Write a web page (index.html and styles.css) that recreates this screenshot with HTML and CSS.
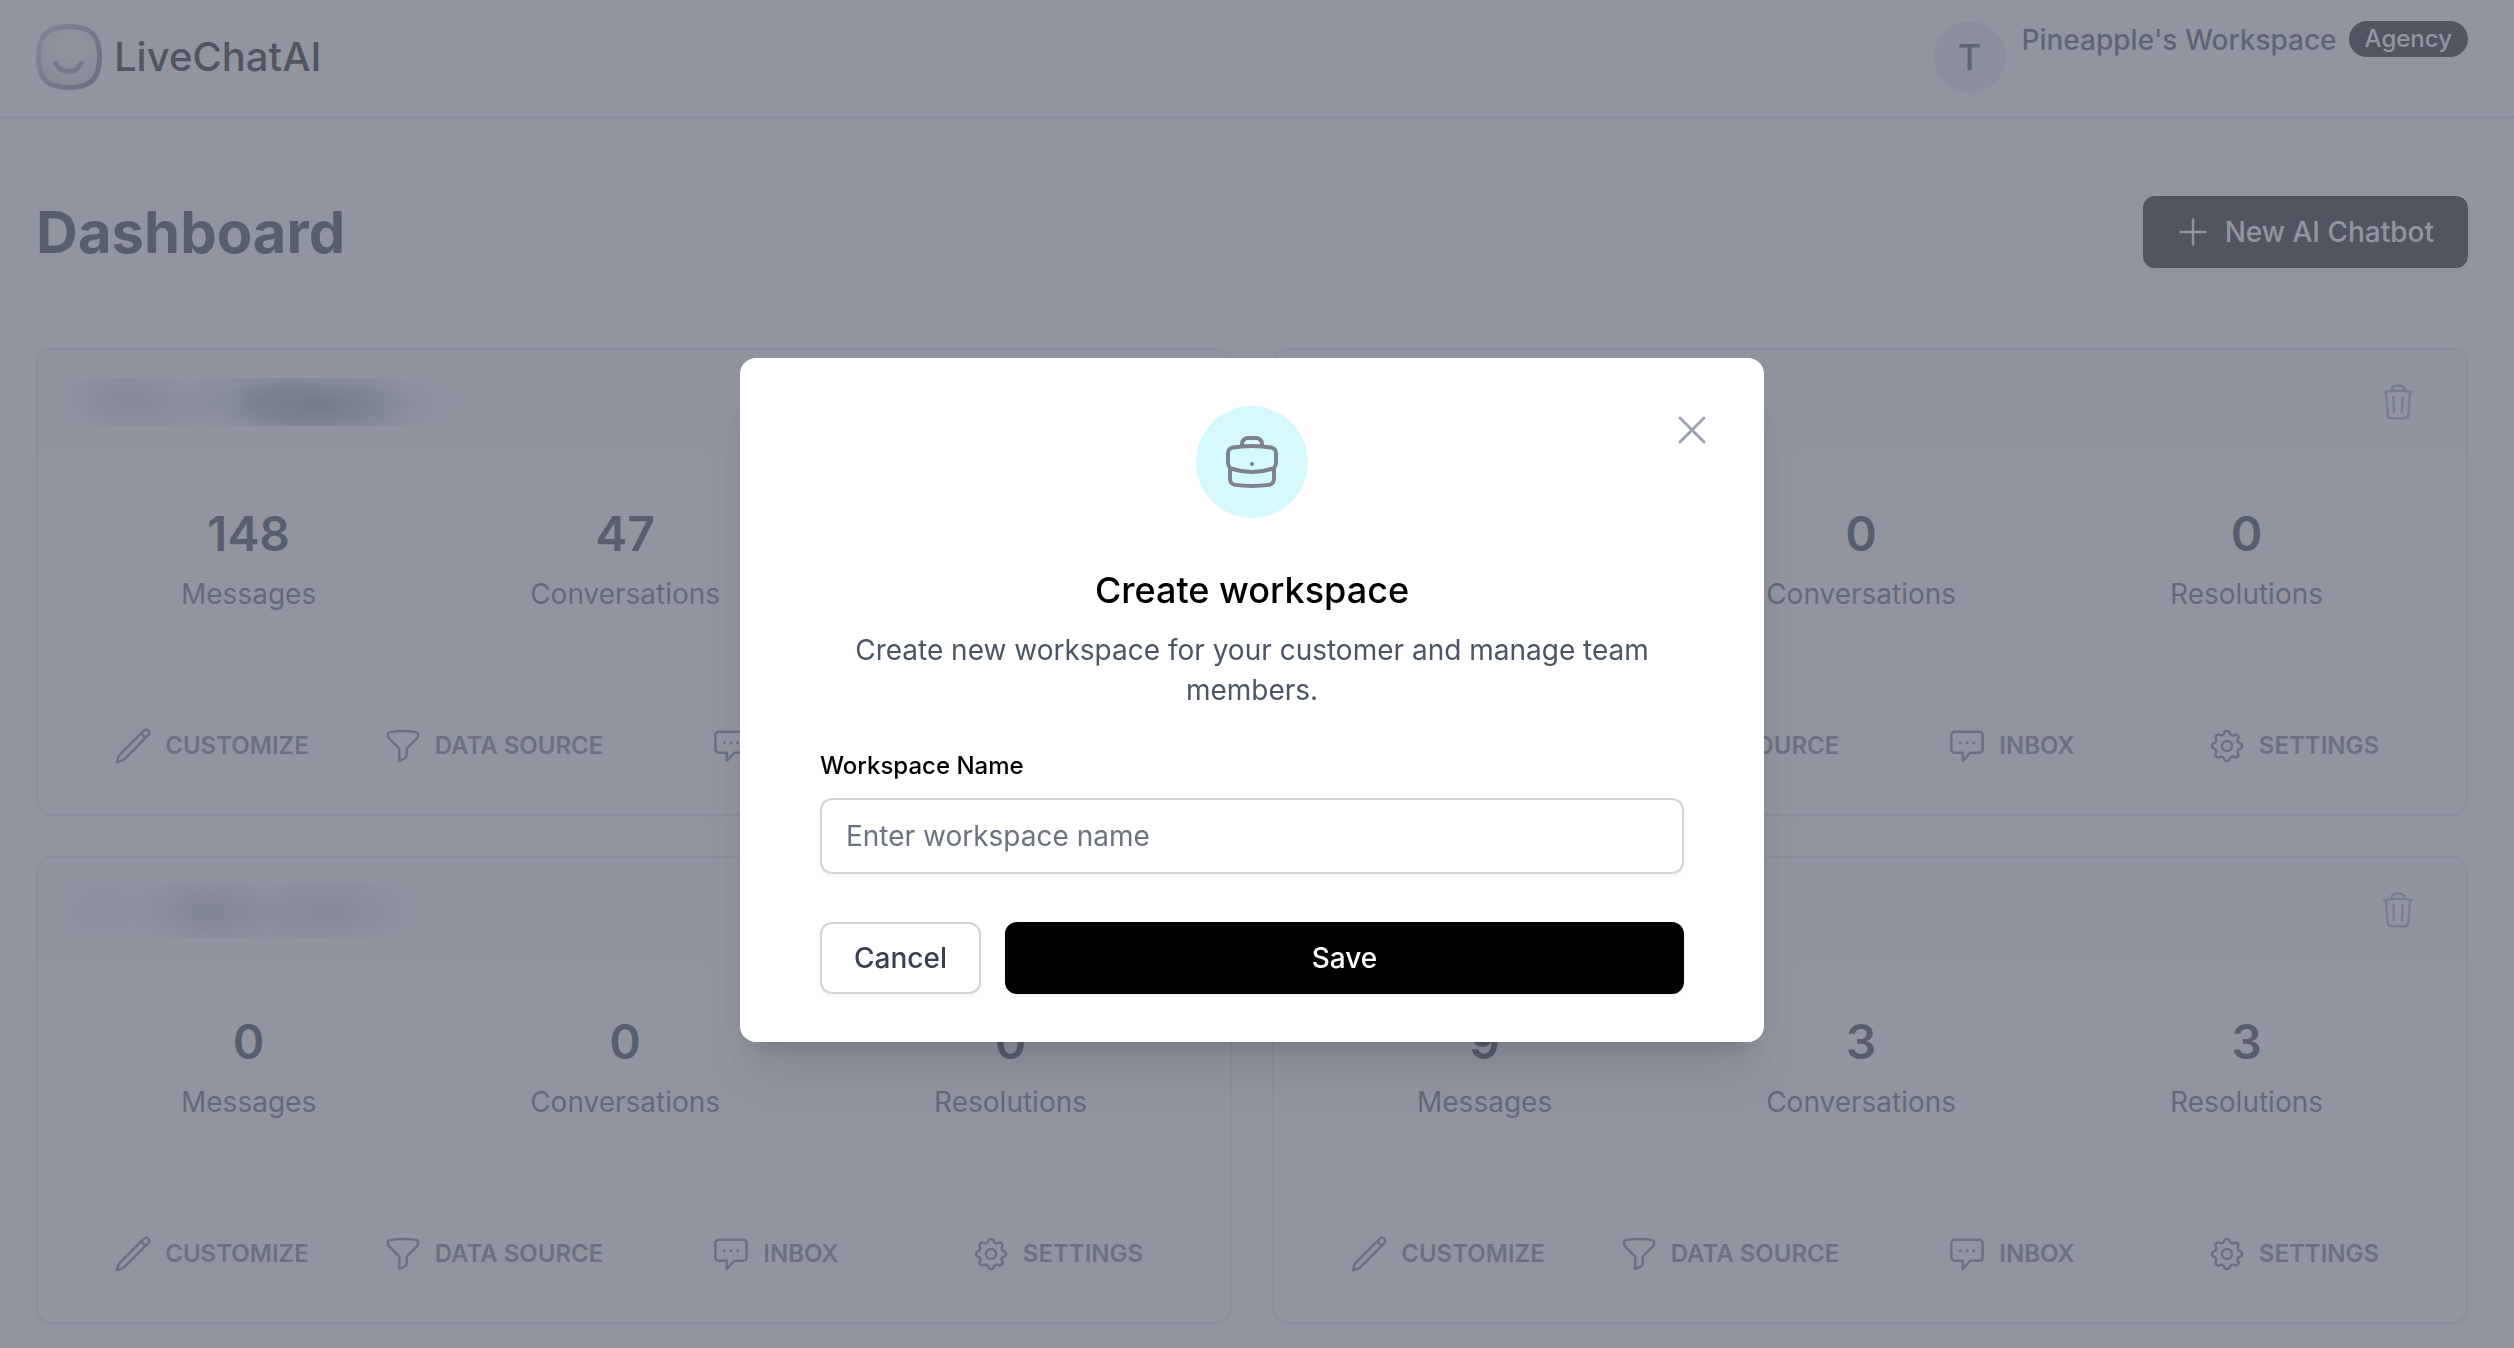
FILE: index.html
```html
<!DOCTYPE html>
<html lang="en">
<head>
    <meta charset="UTF-8">
    <meta name="viewport" content="width=device-width, initial-scale=1.0">
    <title>LiveChatAI - Dashboard</title>
    <link rel="stylesheet" href="styles.css">
</head>
<body>
    <!-- icon sprite -->
    <svg class="sprite" aria-hidden="true">
        <symbol id="plus" viewBox="0 0 24 24"><path d="M12 4.5v15m7.5-7.5h-15"/></symbol>
        <symbol id="close" viewBox="0 0 24 24"><path d="M6 18L18 6M6 6l12 12"/></symbol>
        <symbol id="pencil" viewBox="0 0 24 24"><path d="M16.862 4.487l1.687-1.688a1.875 1.875 0 112.652 2.652L6.832 19.82a4.5 4.5 0 01-1.897 1.13l-2.685.8.8-2.685a4.5 4.5 0 011.13-1.897L16.863 4.487zm0 0L19.5 7.125"/></symbol>
        <symbol id="funnel" viewBox="0 0 24 24"><path d="M12 3c2.755 0 5.455.232 8.083.678.533.09.917.556.917 1.096v1.044a2.25 2.25 0 01-.659 1.591l-5.432 5.432a2.25 2.25 0 00-.659 1.591v2.927a2.25 2.25 0 01-1.244 2.013L9.75 21v-6.568a2.25 2.25 0 00-.659-1.591L3.659 7.409A2.25 2.25 0 013 5.818V4.774c0-.54.384-1.006.917-1.096A48.32 48.32 0 0112 3z"/></symbol>
        <symbol id="inbox" viewBox="0 0 24 24"><path d="M4.5 3.5h15A1.9 1.9 0 0121.4 5.4v8.7a1.9 1.9 0 01-1.9 1.9H14L9.5 21v-5h-5A1.9 1.9 0 012.6 14.1V5.4A1.9 1.9 0 014.5 3.5z"/><path d="M8 10h.01M12 10h.01M16 10h.01" stroke-width="1.8"/></symbol>
        <symbol id="cog" viewBox="0 0 24 24"><path d="M10.325 4.317c.426-1.756 2.924-1.756 3.35 0a1.724 1.724 0 002.573 1.066c1.543-.94 3.31.826 2.37 2.37a1.724 1.724 0 001.065 2.572c1.756.426 1.756 2.924 0 3.35a1.724 1.724 0 00-1.066 2.573c.94 1.543-.826 3.31-2.37 2.37a1.724 1.724 0 00-2.572 1.065c-.426 1.756-2.924 1.756-3.35 0a1.724 1.724 0 00-2.573-1.066c-1.543.94-3.31-.826-2.37-2.37a1.724 1.724 0 00-1.065-2.572c-1.756-.426-1.756-2.924 0-3.35a1.724 1.724 0 001.066-2.573c-.94-1.543.826-3.31 2.37-2.37.996.608 2.296.07 2.572-1.065z"/><path d="M15 12a3 3 0 11-6 0 3 3 0 016 0z"/></symbol>
        <symbol id="trash" viewBox="0 0 24 24"><path d="M14.74 9l-.346 9m-4.788 0L9.26 9m9.968-3.21c.342.052.682.107 1.022.166m-1.022-.165L18.16 19.673a2.25 2.25 0 01-2.244 2.077H8.084a2.25 2.25 0 01-2.244-2.077L4.772 5.79m14.456 0a48.108 48.108 0 00-3.478-.397m-12 .562c.34-.059.68-.114 1.022-.165m0 0a48.11 48.11 0 013.478-.397m7.5 0v-.916c0-1.18-.91-2.164-2.09-2.201a51.964 51.964 0 00-3.32 0c-1.18.037-2.09 1.022-2.09 2.201v.916m7.5 0a48.667 48.667 0 00-7.5 0"/></symbol>
        <symbol id="briefcase" viewBox="0 0 24 24"><path d="M20.25 14.15v4.25c0 1.094-.787 2.036-1.872 2.18-2.087.277-4.216.42-6.378.42s-4.291-.143-6.378-.42c-1.085-.144-1.872-1.086-1.872-2.18v-4.25m16.5 0a2.18 2.18 0 00.75-1.661V8.706c0-1.081-.768-2.015-1.837-2.175a48.114 48.114 0 00-3.413-.387m4.5 8.006c-.194.165-.42.295-.673.38A23.978 23.978 0 0112 15.75c-2.648 0-5.195-.429-7.577-1.22a2.016 2.016 0 01-.673-.38m0 0A2.18 2.18 0 013 12.489V8.706c0-1.081.768-2.015 1.837-2.175a48.111 48.111 0 013.413-.387m7.5 0V5.25A2.25 2.25 0 0013.5 3h-3a2.25 2.25 0 00-2.25 2.25v.894m7.5 0a48.667 48.667 0 00-7.5 0M12 12.75h.008v.008H12v-.008z"/></symbol>
    </svg>

    <header class="topbar">
        <div class="container topbar-inner">
            <a class="brand" href="#">
                <svg class="logo" viewBox="0 0 66 66" aria-hidden="true">
                    <defs>
                        <linearGradient id="ring" x1="0" y1="0.3" x2="0.8" y2="1">
                            <stop offset="0" stop-color="#b9b7c2"/>
                            <stop offset="1" stop-color="#726c8c"/>
                        </linearGradient>
                        <radialGradient id="face" cx="0.55" cy="0.3" r="0.75">
                            <stop offset="0" stop-color="#ffffff"/>
                            <stop offset="1" stop-color="#d4d4d4"/>
                        </radialGradient>
                    </defs>
                    <path d="M33 2.5C55 2.5 63.5 11 63.5 33S55 63.5 33 63.5 2.5 55 2.5 33 11 2.5 33 2.5z" fill="url(#face)" stroke="url(#ring)" stroke-width="5"/>
                    <path d="M18.5 37c2 5.5 7 10.5 14 10.5S44.5 42.5 46.5 37" fill="none" stroke="#8f8aa8" stroke-width="5"/>
                </svg>
                <span>LiveChatAI</span>
            </a>
            <div class="account">
                <span class="avatar">T</span>
                <span class="workspace">Pineapple's Workspace</span>
                <span class="badge">Agency</span>
            </div>
        </div>
    </header>

    <main class="container">
        <div class="page-head">
            <h1>Dashboard</h1>
            <button class="btn btn-dark" type="button"><svg class="icon"><use href="#plus"/></svg>New AI Chatbot</button>
        </div>

        <div class="cards">
            <section class="card">
                <div class="card-head">
                    <span class="hidden-name name-one"></span>
                    <button class="icon-btn" type="button" aria-label="Delete"><svg class="icon"><use href="#trash"/></svg></button>
                </div>
                <dl class="stats">
                    <div><dt>Messages</dt><dd>148</dd></div>
                    <div><dt>Conversations</dt><dd>47</dd></div>
                    <div><dt>Resolutions</dt><dd>0</dd></div>
                </dl>
                <nav class="actions">
                    <a href="#"><svg class="icon"><use href="#pencil"/></svg>CUSTOMIZE</a>
                    <a href="#"><svg class="icon"><use href="#funnel"/></svg>DATA SOURCE</a>
                    <a href="#"><svg class="icon"><use href="#inbox"/></svg>INBOX</a>
                    <a href="#"><svg class="icon"><use href="#cog"/></svg>SETTINGS</a>
                </nav>
            </section>

            <section class="card">
                <div class="card-head">
                    <span class="hidden-name"></span>
                    <button class="icon-btn" type="button" aria-label="Delete"><svg class="icon"><use href="#trash"/></svg></button>
                </div>
                <dl class="stats">
                    <div><dt>Messages</dt><dd>0</dd></div>
                    <div><dt>Conversations</dt><dd>0</dd></div>
                    <div><dt>Resolutions</dt><dd>0</dd></div>
                </dl>
                <nav class="actions">
                    <a href="#"><svg class="icon"><use href="#pencil"/></svg>CUSTOMIZE</a>
                    <a href="#"><svg class="icon"><use href="#funnel"/></svg>DATA SOURCE</a>
                    <a href="#"><svg class="icon"><use href="#inbox"/></svg>INBOX</a>
                    <a href="#"><svg class="icon"><use href="#cog"/></svg>SETTINGS</a>
                </nav>
            </section>

            <section class="card">
                <div class="card-head">
                    <span class="hidden-name name-two"></span>
                    <button class="icon-btn" type="button" aria-label="Delete"><svg class="icon"><use href="#trash"/></svg></button>
                </div>
                <dl class="stats">
                    <div><dt>Messages</dt><dd>0</dd></div>
                    <div><dt>Conversations</dt><dd>0</dd></div>
                    <div><dt>Resolutions</dt><dd>0</dd></div>
                </dl>
                <nav class="actions">
                    <a href="#"><svg class="icon"><use href="#pencil"/></svg>CUSTOMIZE</a>
                    <a href="#"><svg class="icon"><use href="#funnel"/></svg>DATA SOURCE</a>
                    <a href="#"><svg class="icon"><use href="#inbox"/></svg>INBOX</a>
                    <a href="#"><svg class="icon"><use href="#cog"/></svg>SETTINGS</a>
                </nav>
            </section>

            <section class="card">
                <div class="card-head">
                    <span class="hidden-name"></span>
                    <button class="icon-btn" type="button" aria-label="Delete"><svg class="icon"><use href="#trash"/></svg></button>
                </div>
                <dl class="stats">
                    <div><dt>Messages</dt><dd>9</dd></div>
                    <div><dt>Conversations</dt><dd>3</dd></div>
                    <div><dt>Resolutions</dt><dd>3</dd></div>
                </dl>
                <nav class="actions">
                    <a href="#"><svg class="icon"><use href="#pencil"/></svg>CUSTOMIZE</a>
                    <a href="#"><svg class="icon"><use href="#funnel"/></svg>DATA SOURCE</a>
                    <a href="#"><svg class="icon"><use href="#inbox"/></svg>INBOX</a>
                    <a href="#"><svg class="icon"><use href="#cog"/></svg>SETTINGS</a>
                </nav>
            </section>
        </div>
    </main>

    <div class="overlay">
        <form class="modal" role="dialog" aria-modal="true" aria-labelledby="modal-title">
            <button class="icon-btn modal-close" type="button" aria-label="Close"><svg class="icon"><use href="#close"/></svg></button>
            <div class="modal-icon"><svg class="icon"><use href="#briefcase"/></svg></div>
            <h2 id="modal-title">Create workspace</h2>
            <p>Create new workspace for your customer and manage team members.</p>
            <label for="workspace-name">Workspace Name</label>
            <input type="text" id="workspace-name" placeholder="Enter workspace name">
            <div class="modal-buttons">
                <button class="btn btn-light" type="button">Cancel</button>
                <button class="btn btn-dark btn-save" type="submit">Save</button>
            </div>
        </form>
    </div>
</body>
</html>
```

FILE: styles.css
```css
* {
    box-sizing: border-box;
}

body {
    margin: 0;
    height: 100vh;
    padding-right: 10px;
    overflow: hidden;
    background-color: #fff;
    color: #1f2937;
    font-family: Inter, "Liberation Sans", sans-serif;
    font-size: 28px;
    line-height: 40px;
}

h1, h2, p, dl, dd {
    margin: 0;
}

a {
    color: inherit;
    text-decoration: none;
}

button, input {
    font: inherit;
}

.sprite {
    display: none;
}

.icon {
    width: 40px;
    height: 40px;
    flex: none;
    display: block;
    fill: none;
    stroke: currentColor;
    stroke-width: 1.5;
    stroke-linecap: round;
    stroke-linejoin: round;
}

.icon-btn {
    display: block;
    padding: 0;
    border: none;
    background: none;
    color: #9ca3af;
}

.container {
    max-width: 2560px;
    margin: 0 auto;
    padding: 0 36px;
}

/* top bar */
.topbar {
    margin-right: -10px;
    padding-right: 10px;
    border-bottom: 2px solid #e5e7eb;
    box-shadow: 0 2px 4px rgba(0, 0, 0, 0.05);
}

.topbar-inner {
    display: flex;
    justify-content: space-between;
    align-items: flex-start;
    padding-top: 21px;
    padding-bottom: 23px;
}

.brand {
    display: flex;
    align-items: center;
    gap: 12px;
    height: 72px;
    color: #000;
    font-size: 40px;
    font-weight: 500;
}

.logo {
    width: 66px;
    height: 66px;
}

.account {
    display: flex;
    align-items: flex-start;
    font-weight: 500;
    color: #374151;
}

.avatar {
    width: 72px;
    height: 72px;
    margin-right: 16px;
    border-radius: 50%;
    background-color: #e5e7eb;
    font-size: 36px;
    line-height: 72px;
    text-align: center;
}

.workspace {
    line-height: 38px;
}

.badge {
    margin-left: 12px;
    padding: 0 16px;
    border-radius: 18px;
    background-color: #000;
    color: #fff;
    font-size: 24px;
    line-height: 36px;
}

/* buttons */
.btn {
    display: flex;
    align-items: center;
    justify-content: center;
    gap: 12px;
    padding: 14px 32px;
    border: 2px solid transparent;
    border-radius: 12px;
    font-weight: 500;
    box-shadow: 0 2px 4px rgba(0, 0, 0, 0.05);
}

.btn-dark {
    background-color: #000;
    border-color: #000;
    color: #fff;
}

.btn-light {
    background-color: #fff;
    border-color: #d1d5db;
    color: #374151;
}

.page-head {
    display: flex;
    justify-content: space-between;
    align-items: center;
    padding: 78px 0 80px;
}

.page-head h1 {
    font-size: 58px;
    line-height: 72px;
    font-weight: 700;
}

.page-head .btn {
    padding-left: 28px;
}

/* chatbot cards */
.cards {
    display: grid;
    grid-template-columns: 1fr 1fr;
    gap: 40px;
}

.card {
    border: 2px solid #e5e7eb;
    border-radius: 16px;
    background-color: #fff;
    box-shadow: 0 2px 4px rgba(0, 0, 0, 0.05);
    overflow: hidden;
}

.card-head {
    display: flex;
    justify-content: space-between;
    align-items: center;
    padding: 32px 48px 32px 28px;
    background-color: #f9fafb;
}

.hidden-name {
    width: 392px;
    height: 56px;
    margin: -8px 0;
}

.name-one {
    height: 48px;
    background:
        radial-gradient(ellipse 96px 44px at 254px 28px, rgba(55, 70, 90, 0.5), transparent),
        radial-gradient(ellipse 80px 40px at 194px 22px, rgba(55, 70, 90, 0.3), transparent),
        radial-gradient(ellipse 80px 40px at 80px 28px, rgba(75, 75, 80, 0.2), transparent),
        radial-gradient(ellipse 80px 36px at 310px 26px, rgba(75, 80, 90, 0.16), transparent),
        radial-gradient(ellipse 60px 36px at 50px 16px, rgba(75, 80, 90, 0.12), transparent);
}

.name-two {
    width: 350px;
    background:
        radial-gradient(ellipse 70px 40px at 136px 28px, rgba(75, 80, 95, 0.3), transparent),
        radial-gradient(ellipse 80px 40px at 272px 28px, rgba(75, 80, 90, 0.22), transparent),
        radial-gradient(ellipse 100px 40px at 200px 34px, rgba(75, 80, 90, 0.16), transparent),
        radial-gradient(ellipse 60px 34px at 40px 28px, rgba(75, 80, 90, 0.1), transparent);
}

.stats {
    display: flex;
    justify-content: space-around;
    padding: 48px 36px;
    text-align: center;
}

.stats div {
    display: flex;
    flex-direction: column-reverse;
    gap: 8px;
}

.stats dt {
    color: #4b5563;
}

.stats dd {
    font-size: 48px;
    line-height: 64px;
    font-weight: 600;
}

.actions {
    display: grid;
    grid-template-columns: repeat(4, 1fr);
    padding: 64px 32px 48px;
    color: #6b7280;
    font-size: 24px;
    font-weight: 600;
}

.actions a {
    display: flex;
    align-items: center;
    justify-content: center;
    gap: 12px;
}

/* modal */
.overlay {
    position: fixed;
    inset: 0;
    display: flex;
    align-items: center;
    justify-content: center;
    padding: 52px 10px 0 0;
    background-color: rgba(107, 114, 128, 0.75);
}

.modal {
    position: relative;
    display: flex;
    flex-direction: column;
    width: 100%;
    max-width: 1024px;
    padding: 48px 80px;
    border-radius: 16px;
    background-color: #fff;
    box-shadow: 0 40px 50px -10px rgba(0, 0, 0, 0.1), 0 16px 20px -12px rgba(0, 0, 0, 0.1);
}

.modal-close {
    position: absolute;
    top: 48px;
    right: 48px;
}

.modal-close .icon {
    width: 48px;
    height: 48px;
}

.modal-icon {
    align-self: center;
    padding: 24px;
    border-radius: 50%;
    background-color: #d6f9fe;
    color: #7d8190;
}

.modal-icon .icon {
    width: 64px;
    height: 64px;
}

.modal h2 {
    margin-top: 48px;
    color: #000;
    font-size: 36px;
    line-height: 48px;
    font-weight: 500;
    text-align: center;
}

.modal p {
    margin-top: 16px;
    color: #4b5563;
    text-align: center;
}

.modal label {
    margin-top: 40px;
    color: #000;
    font-size: 24px;
    line-height: 32px;
    font-weight: 500;
}

.modal input {
    height: 76px;
    margin-top: 16px;
    padding: 0 24px;
    border: 2px solid #d1d5db;
    border-radius: 12px;
    background-color: #fff;
    box-shadow: 0 2px 4px rgba(0, 0, 0, 0.05);
}

.modal input::placeholder {
    color: #6b7280;
    opacity: 1;
}

.modal-buttons {
    display: flex;
    gap: 24px;
    margin-top: 48px;
}

.btn-save {
    flex: 1;
}
```
